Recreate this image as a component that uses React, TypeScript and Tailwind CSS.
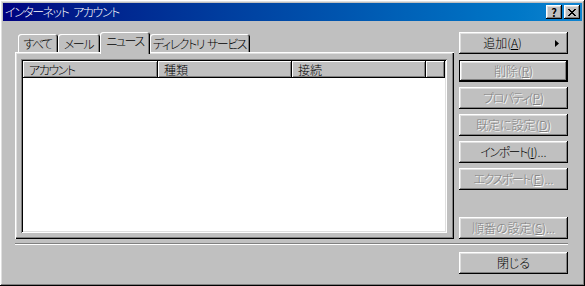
import type React from "react"

const raised =
  "shadow-[inset_-1px_-1px_#000,inset_1px_1px_#fff,inset_-2px_-2px_#808080,inset_2px_2px_#dfdfdf]"

// katakana in the old UI font is proportional and narrow
function K({ children }: { children: React.ReactNode }) {
  return <span className="tracking-[-1.5px]">{children}</span>
}

function Mn({ children }: { children: React.ReactNode }) {
  return <span className="underline underline-offset-[1px]">{children}</span>
}

function Btn({
  children,
  disabled,
  isDefault,
  className = "",
}: {
  children: React.ReactNode
  disabled?: boolean
  isDefault?: boolean
  className?: string
}) {
  const text = disabled ? "text-[#808080] [text-shadow:1px_1px_0_#fff]" : "text-black"
  if (isDefault) {
    return (
      <div className={`h-[22px] w-full border border-black ${className}`}>
        <div className={`flex h-full w-full items-center justify-center ${raised} ${text}`}>{children}</div>
      </div>
    )
  }
  return (
    <div className={`flex h-[22px] w-full items-center justify-center whitespace-nowrap ${raised} ${text} ${className}`}>
      {children}
    </div>
  )
}

function Tab({ words, w, selected }: { words: string[]; w: string; selected?: boolean }) {
  const label = (
    <span className="flex gap-[3px]">
      {words.map((s) => (
        <K key={s}>{s}</K>
      ))}
    </span>
  )
  if (selected) {
    return (
      <div
        className={`${w} relative z-10 -mb-[2px] flex h-[22px] items-start justify-center whitespace-nowrap rounded-t-[3px] bg-[#c0c0c0] pt-[3px] shadow-[inset_1px_1px_#fff,inset_-1px_0_#000,inset_-2px_0_#808080]`}
      >
        {label}
      </div>
    )
  }
  return (
    <div
      className={`${w} flex h-[18px] items-center justify-center whitespace-nowrap rounded-t-[3px] pr-[1px] pt-[1px] shadow-[inset_1px_1px_#fff,inset_-1px_0_#000,inset_-2px_0_#808080]`}
    >
      {label}
    </div>
  )
}

function HeadCell({ children, w }: { children?: React.ReactNode; w: string }) {
  return (
    <div
      className={`${w} flex h-[17px] shrink-0 items-center pl-[6px] shadow-[inset_-1px_-1px_#000,inset_1px_1px_#fff,inset_-2px_-2px_#808080]`}
    >
      {children}
    </div>
  )
}

export default function App() {
  return (
    <div
      className={`flex h-[286px] w-[585px] flex-col bg-[#c0c0c0] p-[3px] text-[12px] font-light leading-none text-black ${raised} [font-family:'Noto_Sans_CJK_JP',sans-serif] [font-feature-settings:'palt']`}
    >
      {/* title bar */}
      <div className="flex h-[18px] shrink-0 items-center bg-gradient-to-r from-[#000080] to-[#1084d0] pl-[2px] pr-[2px]">
        <span className="flex gap-[5px] text-white">
          <K>インターネット</K>
          <K>アカウント</K>
        </span>
        <div className="flex-1" />
        <div className={`flex h-[14px] w-[16px] items-center justify-center bg-[#c0c0c0] text-[11px] font-bold ${raised}`}>
          ?
        </div>
        <div className={`ml-[2px] flex h-[14px] w-[16px] items-center justify-center bg-[#c0c0c0] ${raised}`}>
          <svg width="8" height="7" viewBox="0 0 8 7">
            <path d="M0 0h2v1h1v1h2v-1h1v-1h2v1h-1v1h-1v1h-1v1h1v1h1v1h1v1h-2v-1h-1v-1h-2v1h-1v1h-2v-1h1v-1h1v-1h1v-1h-1v-1h-1v-1h-1z" fill="#000" />
          </svg>
        </div>
      </div>

      {/* body */}
      <div className="flex flex-1 flex-col pl-[12px] pr-[14px] pt-[10px]">
        <div className="flex">
          {/* left: tabs + panel */}
          <div className="flex w-[439px] flex-col">
            <div className="flex h-[21px] items-end pl-[3px]">
              <Tab words={["すべて"]} w="w-[40px]" />
              <Tab words={["メール"]} w="w-[42px]" />
              <Tab words={["ニュース"]} w="w-[50px]" selected />
              <Tab words={["ディレクトリ", "サービス"]} w="w-[100px]" />
            </div>
            <div className="h-[187px] pb-[6px] pl-[6px] pr-[7px] pt-[7px] shadow-[inset_1px_1px_#fff,inset_-1px_-1px_#000,inset_-2px_-2px_#808080,inset_2px_2px_#dfdfdf]">
              <div className="h-full w-full bg-white p-[2px] shadow-[inset_1px_1px_#808080,inset_-1px_-1px_#fff,inset_2px_2px_#000,inset_-2px_-2px_#dfdfdf]">
                <div className="flex bg-[#c0c0c0]">
                  <HeadCell w="w-[135px]">
                    <K>アカウント</K>
                  </HeadCell>
                  <HeadCell w="w-[134px]">種類</HeadCell>
                  <HeadCell w="w-[134px]">接続</HeadCell>
                  <HeadCell w="flex-1" />
                </div>
              </div>
            </div>
          </div>

          {/* right: buttons */}
          <div className="ml-auto flex w-[109px] flex-col">
            <Btn className="relative mt-[1px]">
              <span className="pr-[22px]">
                追加(<Mn>A</Mn>)
              </span>
              <svg className="absolute right-[9px] top-[8px]" width="4" height="7" viewBox="0 0 4 7">
                <path d="M0 0L4 3.5L0 7Z" fill="#000" />
              </svg>
            </Btn>
            <Btn disabled isDefault className="mt-[6px]">
              削除(<Mn>R</Mn>)
            </Btn>
            <Btn disabled className="mt-[5px]">
              <K>プロパティ</K>(<Mn>P</Mn>)
            </Btn>
            <Btn disabled className="mt-[5px]">
              既定に設定(<Mn>D</Mn>)
            </Btn>
            <Btn className="mt-[5px]">
              <K>インポート</K>(<Mn>I</Mn>)...
            </Btn>
            <Btn disabled className="mt-[5px]">
              <K>エクスポート</K>(<Mn>E</Mn>)...
            </Btn>
            <Btn disabled className="mt-auto">
              順番の設定(<Mn>S</Mn>)...
            </Btn>
          </div>
        </div>

        {/* separator */}
        <div className="mt-[4px] h-[2px] w-[553px] border-b border-t border-b-white border-t-[#808080]" />

        <div className="mt-[7px] flex justify-end">
          <div className="w-[109px]">
            <Btn>閉じる</Btn>
          </div>
        </div>
      </div>
    </div>
  )
}
